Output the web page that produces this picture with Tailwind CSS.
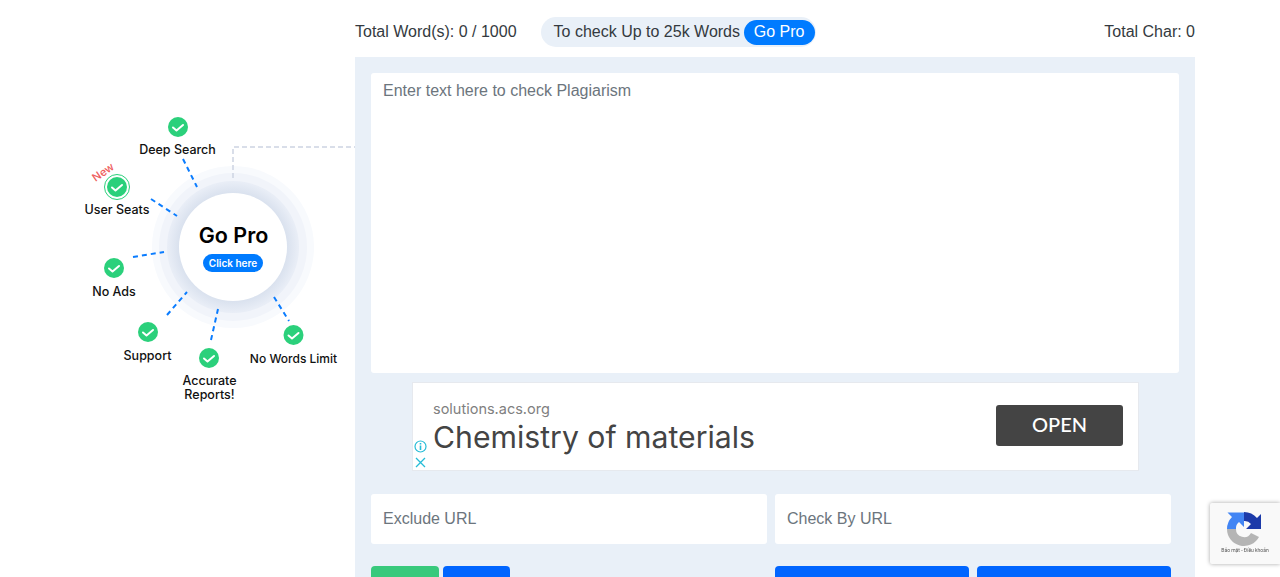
<!DOCTYPE html>
<html lang="en">
<head>
<meta charset="utf-8">
<title>Plagiarism Checker</title>
<script src="https://cdn.jsdelivr.net/npm/@tailwindcss/browser@4"></script>
</head>
<body class="bg-white h-[577px] overflow-hidden font-['Liberation_Sans',sans-serif] text-[#343a40]">

<div class="flex h-[577px] overflow-hidden">
  <!-- Go Pro diagram -->
  <aside class="w-[355px] shrink-0">
    <svg width="355" height="577" viewBox="0 0 355 577" class="font-['Inter',sans-serif] font-medium">
      <defs>
        <radialGradient id="halo" gradientUnits="userSpaceOnUse" cx="233" cy="247" r="81">
          <stop offset="0.66" stop-color="#d9e1ee"/>
          <stop offset="0.8" stop-color="#e8edf6"/>
          <stop offset="1" stop-color="#f3f6fb"/>
        </radialGradient>
      </defs>
      <circle cx="233" cy="247" r="81" fill="#f8fafd"/>
      <circle cx="233" cy="247" r="74" fill="#f1f4fa"/>
      <circle cx="233" cy="247" r="66" fill="url(#halo)"/>
      <circle cx="233" cy="247" r="54" fill="#fff"/>
      <path d="M233 178V147H355" fill="none" stroke="#cdd4e2" stroke-width="1.5" stroke-dasharray="5 3"/>
      <g fill="none" stroke="#0a7cff" stroke-width="2" stroke-dasharray="5 4">
        <path d="M183 159L197 187"/>
        <path d="M151 199L177 216"/>
        <path d="M133 257L164 252"/>
        <path d="M167 315L187 292"/>
        <path d="M211 340L218 309"/>
        <path d="M274 297L289 321"/>
      </g>
      <text x="233.500" y="243" text-anchor="middle" font-size="21.500" font-weight="600" fill="#000">Go Pro</text>
      <rect x="203" y="254" width="60" height="18" rx="9" fill="#007bff"/>
      <text x="233" y="267" text-anchor="middle" font-size="10" font-weight="600" fill="#fff">Click here</text>

      <g fill="#2bd07b">
        <circle cx="178" cy="127" r="10"/>
        <circle cx="117" cy="187" r="10"/>
        <circle cx="114" cy="268" r="10"/>
        <circle cx="148" cy="332" r="10"/>
        <circle cx="209" cy="358" r="10"/>
        <circle cx="293.500" cy="335" r="10"/>
      </g>
      <circle cx="117" cy="187" r="12.500" fill="none" stroke="#2bd07b" stroke-width="1"/>
      <g fill="none" stroke="#fff" stroke-width="2" stroke-linecap="round" stroke-linejoin="round">
        <path d="M173 127.500L176.500 130.500L183 125"/>
        <path d="M112 187.500L115.500 190.500L122 185"/>
        <path d="M109 268.500L112.500 271.500L119 266"/>
        <path d="M143 332.500L146.500 335.500L153 330"/>
        <path d="M204 358.500L207.500 361.500L214 356"/>
        <path d="M288.500 335.500L292 338.500L298.500 333"/>
      </g>

      <g font-size="12.500" fill="#111" text-anchor="middle">
        <text x="177.500" y="154">Deep Search</text>
        <text x="117" y="214">User Seats</text>
        <text x="114" y="296">No Ads</text>
        <text x="147.500" y="359.500">Support</text>
        <text x="209.500" y="385">Accurate</text>
        <text x="209.500" y="399">Reports!</text>
        <text x="293.500" y="362.500" font-size="12">No Words Limit</text>
      </g>
      <text x="103" y="176" text-anchor="middle" font-size="11" fill="#ee5d5d" transform="rotate(-35 103 172)">New</text>
    </svg>
  </aside>

  <!-- Checker -->
  <main class="w-[840px] shrink-0">
    <div class="h-[57px] flex items-center justify-between pt-[7px] text-base">
      <span>Total Word(s): 0 / 1000</span>
      <div class="ml-6 mr-auto h-[30px] w-[275px] pl-[13px] pr-px bg-[#e9f0f8] rounded-full flex items-center justify-between">
        <span>To check Up to 25k Words</span>
        <a href="#" class="h-[25px] w-[71px] rounded-full bg-[#007bff] text-white flex items-center justify-center">Go Pro</a>
      </div>
      <span>Total Char: 0</span>
    </div>

    <div class="h-[520px] bg-[#e9f0f8] px-4 pt-4">
      <textarea class="block w-[808px] h-[300px] bg-white rounded-[3px] px-3 py-[6px] text-base resize-none outline-none placeholder:text-[#6c757d]" placeholder="Enter text here to check Plagiarism"></textarea>

      <!-- Ad -->
      <div class="relative mt-[9px] ml-[41px] w-[727px] h-[89px] bg-white border border-[#e6e9ee] flex items-center justify-between pl-5 pr-[15px]">
        <div class="font-['Inter',sans-serif] text-[#444]">
          <div class="text-[14.5px] leading-[18px] mt-[2px] text-[#808080]">solutions.acs.org</div>
          <div class="text-[30.200px] leading-[38px]">Chemistry of materials</div>
        </div>
        <a href="#" class="w-[127px] h-[41px] mb-[2px] pb-[3px] rounded-[3px] bg-[#444] text-white text-xl font-['Lato',sans-serif] font-medium flex items-center justify-center">OPEN</a>
        <div class="absolute left-0 bottom-0 w-[15px] flex flex-col items-center gap-1 pb-[2px]">
          <svg width="13" height="13" viewBox="0 0 13 13" fill="none" stroke="#26bcd7"><circle cx="6.500" cy="6.500" r="5.500" stroke-width="1.200"/><path d="M6.500 5.500V10M6.500 3V4.400" stroke-width="1.600"/></svg>
          <svg width="11" height="11" viewBox="0 0 11 11" fill="none" stroke="#26bcd7" stroke-width="1.300"><path d="M1 1L10 10M10 1L1 10"/></svg>
        </div>
      </div>

      <div class="mt-[23px] flex gap-2 w-[800px]">
        <input class="w-[396px] h-[50px] bg-white rounded-[3px] px-3 text-base outline-none placeholder:text-[#6c757d]" placeholder="Exclude URL">
        <input class="w-[396px] h-[50px] bg-white rounded-[3px] px-3 text-base outline-none placeholder:text-[#6c757d]" placeholder="Check By URL">
      </div>

      <div class="mt-[22px] flex w-[800px]">
        <button class="w-[68px] h-10 rounded-[4px] bg-[#38c97c]"></button>
        <button class="ml-1 w-[67px] h-10 rounded-[4px] bg-[#0065ff]"></button>
        <button class="ml-auto w-[194px] h-10 rounded-[4px] bg-[#0065ff]"></button>
        <button class="ml-2 w-[194px] h-10 rounded-[4px] bg-[#0065ff]"></button>
      </div>
    </div>
  </main>
</div>

<!-- reCAPTCHA badge -->
<div class="fixed left-[1210px] top-[503px] w-[70px] h-[61px] bg-[#f9f9f9] rounded-l-[2px] shadow-[0_0_4px_rgba(0,0,0,0.35)] flex flex-col items-center pt-[8px]">
  <svg width="36" height="36" viewBox="0 0 36 36" class="ml-[-2px]">
    <path d="M1 18A17 17 0 0 1 6 6L1.500 1.500H18V16L13 11A8 8 0 0 0 10 18Z" fill="#4285f4"/>
    <path d="M18 1A17 17 0 0 1 31 7L35 3V18H20L25 13A8 8 0 0 0 18 10Z" fill="#1c3aa9"/>
    <path d="M1 18H10A8 8 0 0 0 25 22L33 26A17 17 0 0 1 1 18Z" fill="#b5b5b5"/>
  </svg>
  <div class="text-[5px] leading-[7px] text-[#555] font-['Roboto',sans-serif] whitespace-nowrap">Bảo mật - Điều khoản</div>
</div>

</body>
</html>
